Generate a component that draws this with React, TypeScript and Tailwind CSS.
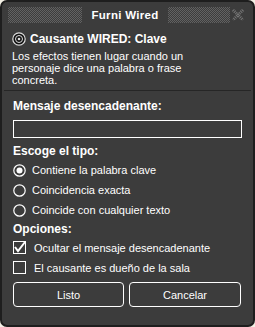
import React from 'react';

const FONT = { fontFamily: '"Liberation Sans", Arial, sans-serif' };

function Radio({ checked }: { checked?: boolean }) {
  return (
    <svg width="13" height="13" viewBox="0 0 13 13" className="shrink-0">
      <circle cx="6.5" cy="6.5" r="5.7" fill="none" stroke="#fff" strokeWidth="1.2" />
      {checked && <circle cx="6.5" cy="6.5" r="3" fill="#fff" />}
    </svg>
  );
}

function Check({ checked }: { checked?: boolean }) {
  return (
    <svg width="13" height="13" viewBox="0 0 13 13" className="shrink-0">
      <rect x="0.5" y="0.5" width="12" height="12" fill="none" stroke="#fff" />
      {checked && <path d="M2 6 L5 10 L12 1" fill="none" stroke="#fff" strokeWidth="2" />}
    </svg>
  );
}

// checkerboard of 1px dots, like the pixel texture of the title bar
const dots =
  'bg-[conic-gradient(#626262_25%,transparent_0_50%,#626262_0_75%,transparent_0)] bg-[length:2px_2px]';

export default function App() {
  return (
    <div className="w-[255px] h-[327px] bg-[#f4f1e6]" style={FONT}>
      <div className="h-full rounded-[7px] border-2 border-[#1e1e1e] bg-[#3c3c3c] flex flex-col text-white text-[11px] leading-[12px] overflow-hidden">
        <div className="h-[24px] flex items-center pl-[6px] pr-[8px] pt-[1px]">
          <div className={`flex-1 h-[16px] ${dots}`} />
          <span className="w-[86px] text-center font-bold text-[11.5px] tracking-[0.3px]">Furni Wired</span>
          <div className={`w-[62px] h-[16px] ${dots}`} />
          <svg width="14" height="14" viewBox="0 0 14 14" className="ml-[1px]">
            <path d="M2 2 L12 12 M12 2 L2 12" stroke="#777" strokeWidth="3" strokeDasharray="1 1" />
          </svg>
        </div>
        <div className="px-[10px] pt-[6px]">
          <div className="flex items-center gap-[4px]">
            <svg width="14" height="14" viewBox="0 0 14 14" className="shrink-0">
              <circle cx="7" cy="7" r="6.2" fill="#111" stroke="#ddd" strokeWidth="1.2" />
              <circle cx="7" cy="7" r="3.5" fill="none" stroke="#ddd" strokeWidth="1" />
              <circle cx="7" cy="7" r="1.3" fill="#ddd" />
            </svg>
            <span className="font-bold text-[12px]">Causante WIRED: Clave</span>
          </div>
          <p className="mt-[4px] max-w-[200px] leading-[12px] pb-[4px]">
            Los efectos tienen lugar cuando un personaje dice una palabra o frase concreta.
          </p>
        </div>
        <div className="mx-[2px] h-px bg-[#262626]" />
        <div className="px-[11px] pt-[9px] flex flex-col">
          <span className="font-bold text-[12px]">Mensaje desencadenante:</span>
          <input className="mt-[8px] h-[18px] w-[229px] border border-white bg-[#3c3c3c] outline-none" />
          <span className="mt-[7px] font-bold text-[12px]">Escoge el tipo:</span>
          <div className="mt-[6px] flex flex-col gap-[6px]">
            <label className="flex items-center gap-[6px] h-[14px]"><Radio checked />Contiene la palabra clave</label>
            <label className="flex items-center gap-[6px] h-[14px]"><Radio />Coincidencia exacta</label>
            <label className="flex items-center gap-[6px] h-[14px]"><Radio />Coincide con cualquier texto</label>
          </div>
          <span className="mt-[6px] font-bold text-[12px]">Opciones:</span>
          <div className="mt-[6px] flex flex-col gap-[7px]">
            <label className="flex items-center gap-[8px] h-[13px]"><Check checked />Ocultar el mensaje desencadenante</label>
            <label className="flex items-center gap-[8px] h-[13px]"><Check />El causante es dueño de la sala</label>
          </div>
          <div className="mt-[8px] flex gap-[5px]">
            <button className="w-[111px] h-[25px] rounded-[4px] border border-white">Listo</button>
            <button className="w-[112px] h-[25px] rounded-[4px] border border-white">Cancelar</button>
          </div>
        </div>
      </div>
    </div>
  );
}
